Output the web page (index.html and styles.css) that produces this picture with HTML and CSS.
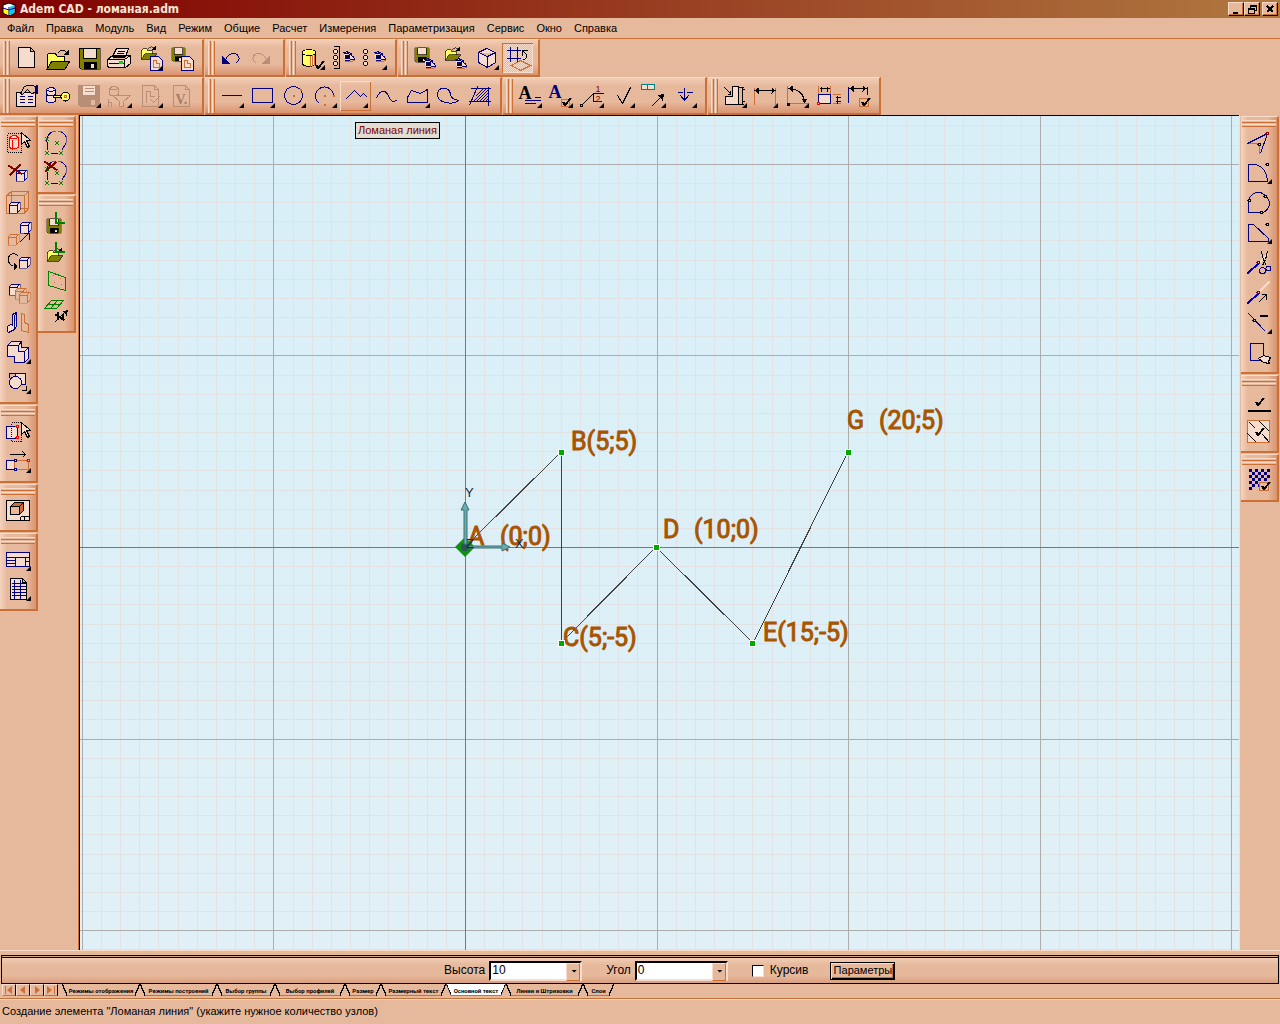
FILE: index.html
```html
<!DOCTYPE html>
<html lang="ru">
<head>
<meta charset="utf-8">
<title>Adem CAD - ломаная.adm</title>
<link rel="stylesheet" href="styles.css">
</head>
<body>
<svg class="defs" aria-hidden="true">
  <symbol id="eye" viewBox="-.5 -.5 14 12"><path class="lt" d="M1 3Q7 1 12 8L2 10"/><path class="o" d="M2 10q5 2 10-1"/><path d="M0 2q6-3 9 2"/><circle cx="4.500" cy="6" r="2" fill="#000" stroke="#000080"/></symbol>
  <symbol id="floppy" viewBox="-.5 -.5 22 22"><path class="k olive" d="M0 0h21v21H2l-2-2z"/><path class="k lt" d="M4 0h13v10H4z"/><path class="k bk" d="M5 14h12v7H5z"/><path class="lt ns" d="M12 16h3v4h-3z"/></symbol>
  <symbol id="folder" viewBox="-.5 -.5 26 22"><path class="k yel" d="M1 20V6l2-2h6l2 3h7v5"/><path class="k olive" d="M1 20l5-8h18l-5 8z"/><path class="k" d="M12 4q4-6 9 0"/><path class="bk ns" d="M23 0v6h-6z"/></symbol>
  <symbol id="doc" viewBox="-.5 -.5 14 16"><path class="lt" d="M0 0h8l4 4v10H0z"/><path class="o" d="M3 11V4h3v3h3v4z"/></symbol>
  <symbol id="check" viewBox="-.5 -.5 10 9"><path class="k w2" d="M1 4l2 3 6-7"/></symbol>
  <symbol id="cube" viewBox="-.5 -.5 12 12"><path class="lt" d="M0 3l3-3h8v8l-3 3H0zM0 3h8v8M8 3l3-3"/></symbol>
  <symbol id="cubeo" viewBox="-.5 -.5 12 12"><path class="o face" d="M0 3l3-3h8v8l-3 3H0zM0 3h8v8M8 3l3-3"/></symbol>
  <symbol id="circles" viewBox="-.5 -.5 22 24"><path d="M2 10a10 9 0 1 1 18 3l-3 5M2 10v8M6 21h7"/><path class="g" d="M0 5l4 4m0-4l-4 4M10 9l4 4m0-4l-4 4M0 19l4 4m0-4l-4 4M14 19l4 4m0-4l-4 4"/></symbol>
</svg>

<header class="titlebar">
  <svg class="logo" viewBox="0 0 14 14" aria-hidden="true"><path fill="#fff" stroke="#000" d="M1 3l6-2 6 2v8l-6 3-6-3z"/><path fill="#ff0" d="M2 7l5 2v4l-5-2z"/><path fill="#0cf" d="M8 5l4-2v8l-4 2z"/><path stroke="#008" fill="none" d="M1 6l6 2 6-2M7 5v9"/></svg>
  <h1>Adem CAD - ломаная.adm</h1>
  <div class="winbtns">
    <button aria-label="Свернуть"><svg viewBox="0 0 12 10"><path d="M3 9h5" stroke-width="2"/></svg></button>
    <button aria-label="Восстановить"><svg viewBox="0 0 12 10"><path d="M4 1h6v5H8M4 1v3M2 4h6v5H2zM2 5h6M4 2h6"/></svg></button>
    <button class="close" aria-label="Закрыть"><svg viewBox="0 0 12 10"><path d="M3 2l6 6M9 2L3 8" stroke-width="2"/></svg></button>
  </div>
</header>

<nav class="menubar">
  <button>Файл</button><button>Правка</button><button>Модуль</button><button>Вид</button><button>Режим</button><button>Общие</button><button>Расчет</button><button>Измерения</button><button>Параметризация</button><button>Сервис</button><button>Окно</button><button>Справка</button>
</nav>

<div class="row">
  <div class="bar">
    <button class="tool" aria-label="Новый"><svg viewBox="-.5 -.5 30 30"><path class="k lt" d="M7 4h12l4 4v16H7zM19 4v4h4"/></svg></button>
    <button class="tool" aria-label="Открыть"><svg viewBox="-.5 -.5 30 30"><use href="#folder" x="3" y="5" width="26" height="22"/></svg></button>
    <button class="tool" aria-label="Сохранить"><svg viewBox="-.5 -.5 30 30"><use href="#floppy" x="5" y="4" width="22" height="22"/></svg></button>
    <button class="tool" aria-label="Печать"><svg viewBox="-.5 -.5 30 30"><path class="k lt" d="M3 16l5-4h18v8l-5 4H4l-1-2zM3 16h17l6-4M20 16v8M4 20h16M8 13l4-8h12l-3 8zM13 8h7M12 10h7M8 14h12"/><path d="M14 19h4" stroke="#0d0" stroke-width="3"/></svg></button>
    <button class="tool more" aria-label="Открыть фрагмент"><svg viewBox="-.5 -.5 30 30"><use href="#folder" x="5" y="2" width="17" height="15"/><use href="#doc" x="14" y="12" width="14" height="16"/></svg></button>
    <button class="tool" aria-label="Сохранить фрагмент"><svg viewBox="-.5 -.5 30 30"><use href="#floppy" x="5" y="4" width="14" height="14"/><use href="#doc" x="14" y="12" width="14" height="16"/></svg></button>
  </div>
  <div class="bar">
    <button class="tool" aria-label="Отменить"><svg viewBox="-.5 -.5 30 30"><path d="M9 16q4-7 10-6q5 3 3 7l-3 3"/><path class="nv" d="M6 13v7h7z"/></svg></button>
    <button class="tool" aria-label="Повторить"><svg viewBox="-.5 -.5 30 30"><g class="dim"><path d="M19 16q-4-7-10-6q-5 3-3 7l3 3"/><path class="gy" d="M22 13v7h-7z"/></g></svg></button>
  </div>
  <div class="bar">
    <button class="tool more" aria-label="Тело"><svg viewBox="-.5 -.5 30 30"><path class="k yel" d="M5 9v12q6 4 13 0V9"/><path class="o" d="M15 11v11M17 11v10M13 12v11"/><ellipse class="k yel" cx="11.500" cy="9" rx="6.500" ry="3"/><use href="#check" x="17" y="17" width="10" height="9"/></svg></button>
    <button class="tool" aria-label="Показать группу"><svg viewBox="-.5 -.5 30 30"><path class="k" d="M5 3h6v22H5"/><g class="lt"><circle cx="7" cy="8" r="2"/><circle cx="7" cy="14" r="2"/><circle cx="7" cy="20" r="2"/></g><use href="#eye" x="14" y="7" width="14" height="12"/></svg></button>
    <button class="tool more" aria-label="Видимость"><svg viewBox="-.5 -.5 30 30"><g class="lt"><circle cx="6" cy="8" r="2"/><circle cx="6" cy="14" r="2"/><circle cx="6" cy="20" r="2"/></g><use href="#eye" x="14" y="7" width="14" height="12"/></svg></button>
  </div>
  <div class="bar">
    <button class="tool" aria-label="Сохранить вид"><svg viewBox="-.5 -.5 30 30"><use href="#floppy" x="5" y="4" width="15" height="15"/><use href="#eye" x="14" y="14" width="14" height="12"/></svg></button>
    <button class="tool" aria-label="Загрузить вид"><svg viewBox="-.5 -.5 30 30"><use href="#folder" x="4" y="3" width="17" height="15"/><use href="#eye" x="14" y="14" width="14" height="12"/></svg></button>
    <button class="tool more" aria-label="Изометрия"><svg viewBox="-.5 -.5 30 30"><path class="lt" d="M7 9l8-4 9 4v10l-8 5-9-5zM7 9l9 4 8-4M16 13v11"/></svg></button>
    <button class="tool pressed" aria-label="Рабочая плоскость" aria-pressed="true"><svg viewBox="-.5 -.5 30 30"><path d="M8 3v15M15 3v15M4 7h14M4 15h14"/><path class="k" d="M20 12V7h5M20 7l4 4q1 4-3 5"/><path class="o" d="M9 22l9-5 10 5-10 5z"/></svg></button>
  </div>
</div>

<div class="row">
  <div class="bar">
    <button class="tool" aria-label="Свойства"><svg viewBox="-.5 -.5 30 30"><path class="k lt" d="M5 11h19v14H5z"/><path d="M8 15h5M8 18h5M8 21h5M16 15h5M16 18h5M16 21h5"/><path class="k face" d="M9 12l4-7q6-3 11 0v6l-4 1-4-4-5 5z"/><path class="w2" d="M25 3v9"/></svg></button>
    <button class="tool" aria-label="Ключ"><svg viewBox="-.5 -.5 30 30"><path class="lt" d="M4 8v12q5 2 9 0V8q-4-4-9 0q4 4 9 0M4 13q4 3 9 0"/><path class="k yel" d="M11 14h7v2h-7z"/><circle class="k yel" cx="23" cy="15" r="4.500"/><path class="o" d="M22 14h2v2h-2z"/></svg></button>
    <button class="tool more" aria-label="Сохранить слой" disabled><svg viewBox="-.5 -.5 30 30"><g class="dim"><path class="gy" d="M5 4h21v21H7l-2-2z"/><path class="lt" d="M9 4h13v10H9z"/><path d="M11 7h9M11 10h9"/><path class="face" d="M17 18h5v6h-5z"/></g></svg></button>
    <button class="tool more" aria-label="Фильтр" disabled><svg viewBox="-.5 -.5 30 30"><g class="dim"><path d="M5 7q4-4 9 0v6q-4 3-9 0zq4 3 9 0M4 21h3v4M4 17v8"/><path class="face" d="M8 14h18l-7 6v5h-4v-5z"/></g></svg></button>
    <button class="tool more" aria-label="Проверить документ" disabled><svg viewBox="-.5 -.5 30 30"><g class="dim"><path d="M7 4h12l4 4v17H7zM19 4v4h4M11 21V10h4v5h4M15 18l3 3 6-6"/></g></svg></button>
    <button class="tool" aria-label="Версия" disabled><svg viewBox="-.5 -.5 30 30"><g class="dim"><path d="M7 4h12l4 4v17H7zM19 4v4h4"/><text class="serif" x="9" y="22">V.</text></g></svg></button>
  </div>
  <div class="bar">
    <button class="tool more" aria-label="Отрезок"><svg viewBox="-.5 -.5 30 30"><path d="M5 14h20"/></svg></button>
    <button class="tool more" aria-label="Прямоугольник"><svg viewBox="-.5 -.5 30 30"><path d="M5 7h20v14H5z"/></svg></button>
    <button class="tool more" aria-label="Окружность"><svg viewBox="-.5 -.5 30 30"><circle cx="15" cy="14" r="9"/><path class="o w2" d="M14 14h2M21 8h2"/></svg></button>
    <button class="tool more" aria-label="Дуга"><svg viewBox="-.5 -.5 30 30"><path d="M10 22a9 9 0 1 1 14-8"/><path class="o w2" d="M14 14h2M23 14h2M14 23h2"/></svg></button>
    <button class="tool more hover" aria-label="Ломаная линия"><svg viewBox="-.5 -.5 30 30"><path d="M5 18l9-9 6 6 3-3 4 4"/></svg></button>
    <button class="tool" aria-label="Сплайн"><svg viewBox="-.5 -.5 30 30"><path d="M5 17q3-8 7-7q4 0 6 7q3 5 8 1"/></svg></button>
    <button class="tool more" aria-label="Замкнутый контур"><svg viewBox="-.5 -.5 30 30"><path d="M5 21V16l4-7 9 3 7-4v13z"/></svg></button>
    <button class="tool" aria-label="Замкнутый сплайн"><svg viewBox="-.5 -.5 30 30"><path d="M13 21Q3 20 4 11Q7 5 13 7Q17 9 17 14Q19 18 25 19Q20 23 13 21z"/></svg></button>
    <button class="tool" aria-label="Штриховка"><svg viewBox="-.5 -.5 30 30"><path d="M6 7h20M4 20h22M5 24L13 5M24 5v19M9 20L22 7M12 20L24 8M15 20l9-9M18 20l6-6M21 20l3-3M11 15l8-8"/></svg></button>
  </div>
  <div class="bar">
    <button class="tool more" aria-label="Текст"><svg viewBox="-.5 -.5 30 30"><text class="serif" x="4" y="17">A</text><path d="M20 16h6M10 19h16M10 22h11"/></svg></button>
    <button class="tool more" aria-label="Параметры текста"><svg viewBox="-.5 -.5 30 30"><text class="serif blue" x="3" y="16">A</text><path class="o face" d="M16 18h8v7h-8z"/><use href="#check" x="16" y="16" width="10" height="9"/></svg></button>
    <button class="tool more" aria-label="Выноска"><svg viewBox="-.5 -.5 30 30"><path class="k" d="M5 24l12-12h10M17 12v8h8"/><circle class="k face" cx="5" cy="24" r="1"/><text class="num" x="19" y="10">1</text><text class="num" x="19" y="20">2</text></svg></button>
    <button class="tool more" aria-label="Шероховатость"><svg viewBox="-.5 -.5 30 30"><path class="k" d="M10 14l5 8 8-16"/></svg></button>
    <button class="tool more" aria-label="Допуск"><svg viewBox="-.5 -.5 30 30"><path class="teal lt" d="M3 3h13v5H3zM9 3v5"/><path class="k" d="M13 25l11-11"/><path class="bk ns" d="M26 12l-2 7-5-5z"/></svg></button>
    <button class="tool more" aria-label="База"><svg viewBox="-.5 -.5 30 30"><path d="M15 6v13M8 11h5M17 11h6M11 14l4 5 4-5"/></svg></button>
  </div>
  <div class="bar">
    <button class="tool more" aria-label="Авторазмер"><svg viewBox="-.5 -.5 30 30"><path class="k lt" d="M6 15h7V5h6v18H6z"/><path class="k" d="M19 6h5M19 23h5M23 6v16M22 8h3M22 20h3M5 6l6 6M11 9v4H8"/></svg></button>
    <button class="tool more" aria-label="Линейный размер"><svg viewBox="-.5 -.5 30 30"><path class="o" d="M4 6v17M25 6v17"/><path class="k" d="M5 9h20"/><path class="bk ns" d="M4 9l4-3v6zM25 9l-4-3v6z"/></svg></button>
    <button class="tool more" aria-label="Угловой размер"><svg viewBox="-.5 -.5 30 30"><path class="o" d="M6 4v18h20"/><path class="k" d="M8 7q14 1 15 14"/><path class="bk ns" d="M7 7l4-3v6zM23 22l-3-5h6zM5 21h3v3H5z"/></svg></button>
    <button class="tool" aria-label="Размер контура"><svg viewBox="-.5 -.5 30 30"><path class="o" d="M6 4v18M18 4v10M20 13h8M20 22h8"/><path class="lt" d="M6 13h12v9H6z"/><path class="k" d="M7 7h10M9 5v5M15 5v5M25 14v8M23 16h5M23 20h5"/><circle class="r lt" cx="6" cy="22" r="1"/></svg></button>
    <button class="tool" aria-label="Проверка размеров"><svg viewBox="-.5 -.5 30 30"><path d="M5 5v16M24 5v8"/><path class="k" d="M6 7h17"/><path class="bk ns" d="M6 7l4-3v6zM23 7l-4-3v6z"/><path class="o" d="M16 17h9v8h-9z"/><use href="#check" x="17" y="16" width="10" height="9"/></svg></button>
  </div>
</div>

<main class="work">
  <div class="dock">
    <div class="col">
      <div class="bar v">
        <button class="tool" aria-label="Выбрать тело"><svg viewBox="-.5 -.5 30 30"><path class="k dot" d="M4 6h14v19H4z"/><path class="r lt" d="M6 10v10q4 3 9 0V10q-4-4-9 0q4 3 9 0M9 12v10"/><path class="k lt" d="M18 5v12l3-3 3 6 2-1-3-6h4z"/></svg></button>
        <button class="tool" aria-label="Удалить"><svg viewBox="-.5 -.5 30 30"><use href="#cube" x="12" y="12" width="12" height="12"/><path class="m w2" d="M5 8l14 9M17 7L6 18"/></svg></button>
        <button class="tool" aria-label="Масштаб"><svg viewBox="-.5 -.5 30 30"><path class="o" d="M3 8l5-4h17v17l-4 5H3zM3 8h18v18M21 8l4-4M8 4v17h17"/><use href="#cube" x="5" y="14" width="12" height="12"/></svg></button>
        <button class="tool" aria-label="Переместить"><svg viewBox="-.5 -.5 30 30"><use href="#cube" x="16" y="4" width="12" height="12"/><use href="#cubeo" x="4" y="16" width="12" height="12"/><path class="k" d="M16 25l9-9M20 16h6v6"/></svg></button>
        <button class="tool" aria-label="Повернуть"><svg viewBox="-.5 -.5 30 30"><use href="#cube" x="15" y="9" width="12" height="12"/><path class="k" d="M15 9q-4-5-9-1q-4 7 4 11"/><path class="bk ns" d="M10 14l4 5-4 4z"/></svg></button>
        <button class="tool" aria-label="Копировать"><svg viewBox="-.5 -.5 30 30"><use href="#cube" x="5" y="6" width="12" height="12"/><use href="#cubeo" x="11" y="10" width="12" height="12"/><use href="#cubeo" x="15" y="14" width="12" height="12"/></svg></button>
        <button class="tool" aria-label="Симметрия"><svg viewBox="-.5 -.5 30 30"><path class="lt" d="M9 7l4-2v14l-2 3-6 3-1-1v-5l5-3zM9 7v11M13 5l-2 3v14"/><path class="o" d="M18 6v17l7 2v-8l-4-2V7z"/></svg></button>
        <button class="tool more" aria-label="Булева операция"><svg viewBox="-.5 -.5 30 30"><path class="lt" d="M4 8l4-4h10v6h7v11l-4 4H11v-6H4zM4 8h11v6h6v11M15 8l3-4M21 14l4-4"/></svg></button>
        <button class="tool more" aria-label="Пересечение"><svg viewBox="-.5 -.5 30 30"><path class="k" d="M6 10V6h5M18 23h5v-5"/><path class="lt" d="M12 6h10v11H12z"/><circle class="lt" cx="12" cy="15" r="6"/></svg></button>
      </div>
      <div class="bar v">
        <button class="tool" aria-label="Выбрать узлы"><svg viewBox="-.5 -.5 30 30"><path class="lt" d="M3 10h11v12H3z"/><path class="k dot" d="M8 6h10v19H8z"/><circle class="r lt" cx="14" cy="10" r="1.500"/><circle class="r lt" cx="14" cy="21" r="1.500"/><path class="k lt" d="M18 6v12l3-3 3 6 2-1-3-6h4z"/></svg></button>
        <button class="tool more" aria-label="Переместить узлы"><svg viewBox="-.5 -.5 30 30"><path class="k" d="M6 8h16M19 5l3 3-3 3"/><path class="lt" d="M3 14h8v9H3z"/><path class="o" d="M11 14h14v9H11z"/><circle class="r lt" cx="25" cy="14" r="1.500"/><circle class="lt" cx="12" cy="14" r="1.500"/><circle class="lt" cx="12" cy="23" r="1.500"/></svg></button>
      </div>
      <div class="bar v">
        <button class="tool" aria-label="Вид"><svg viewBox="-.5 -.5 30 30"><path class="k lt" d="M3 5h23v20H3z"/><path class="k" d="M17 21h9M17 21v4M21 21v4"/><path fill="#cb6f34" class="k" d="M7 11l4-4h9v8l-4 4H7z"/><path class="k face" d="M7 11h9v8H7zM16 11l4-4"/></svg></button>
      </div>
      <div class="bar v">
        <button class="tool more" aria-label="Таблица"><svg viewBox="-.5 -.5 30 30"><path class="lt" d="M3 8h23v14H3zM3 13h23M12 13v9M22 13v9M3 16h9M3 19h9M22 17h4"/></svg></button>
        <button class="tool more" aria-label="Спецификация"><svg viewBox="-.5 -.5 30 30"><path class="k lt" d="M7 4h12l4 4v17H7zM19 4v4h4"/><path d="M8 9h14M8 12h14M8 15h14M8 18h14M8 21h14M11 5v19M17 5v19"/></svg></button>
      </div>
    </div>
    <div class="col">
      <div class="bar v">
        <button class="tool" aria-label="Привязка"><svg viewBox="-.5 -.5 30 30"><use href="#circles" x="3" y="4" width="22" height="24"/></svg></button>
        <button class="tool" aria-label="Отменить привязку"><svg viewBox="-.5 -.5 30 30"><use href="#circles" x="3" y="4" width="22" height="24"/><path class="m w2" d="M3 4l13 9M15 4L4 14"/></svg></button>
      </div>
      <div class="bar v">
        <button class="tool" aria-label="Сохранить СК"><svg viewBox="-.5 -.5 30 30"><use href="#floppy" x="5" y="12" width="15" height="15"/><path class="g w2" d="M14 5v11h9"/></svg></button>
        <button class="tool" aria-label="Загрузить СК"><svg viewBox="-.5 -.5 30 30"><use href="#folder" x="5" y="11" width="17" height="15"/><path class="g w2" d="M14 5v10h9"/></svg></button>
        <button class="tool" aria-label="Плоскость"><svg viewBox="-.5 -.5 30 30"><path class="g" d="M7 5l17 6v13L7 19z"/><path class="o" d="M11 9h1M18 12h1M12 16h1M19 18h1"/></svg></button>
        <button class="tool" aria-label="Сетка плоскости"><svg viewBox="-.5 -.5 30 30"><path class="g" d="M10 4h12l-7 8H3zM16 4l-7 8M6 8h12"/><path class="k" d="M13 26l11-11"/><path class="k w2" d="M14 18l9 6M17 16l-1 8M21 17v6"/><path class="bk ns" d="M27 13l-2 6-4-4z"/></svg></button>
      </div>
    </div>
  </div>

  <section class="canvas" aria-label="Чертёж">
    <svg id="drawing">
      <g transform="translate(385 431)">
        <path id="minor" class="minor"/>
        <path id="major" class="major"/>
        <path class="axis" d="M-2000 .5H2000M.5-2000V2000"/>
        <path class="shape" d="M0 0L96-95V96L191 0L288 96L383-95"/>
        <g class="labels">
          <text x="3" y="-2">A</text><text x="35" y="-2">(0;0)</text>
          <text x="106" y="-97">B(5;5)</text>
          <text x="98" y="99">C(5;-5)</text>
          <text x="198" y="-9">D</text><text x="229" y="-9">(10;0)</text>
          <text x="298" y="94">E(15;-5)</text>
          <text x="382" y="-118">G</text><text x="414" y="-118">(20;5)</text>
        </g>
        <path class="diamond" d="M-10 0L0-10L10 0L0 10z"/>
        <circle cx="0" cy="0" r="4" fill="#2b5558"/>
        <path class="arrow" d="M3-1h34v-3l8 4-8 4v-3H3zM-1-3v-34h-3l4-8 4 8H2v34z"/>
        <g class="triad"><text x="0" y="-50">Y</text><text x="50" y="1">X</text><text x="1" y="1">Z</text></g>
        <g class="node"><path d="M93-98h6v6h-6zM93 93h6v6h-6zM188-3h6v6h-6zM284 93h6v6h-6zM380-98h6v6h-6z"/></g>
      </g>
    </svg>
    <div class="tip" role="tooltip">Ломаная линия</div>
  </section>

  <div class="dock right">
    <div class="col">
      <div class="bar v">
        <button class="tool" aria-label="Узел"><svg viewBox="-.5 -.5 30 30"><path class="o" d="M3 16h12v10"/><path d="M3 16l20-10-7 20"/><circle class="m lt" cx="23" cy="6" r="1.500"/><circle class="k lt" cx="15" cy="17" r="1.500"/></svg></button>
        <button class="tool more" aria-label="Скругление"><svg viewBox="-.5 -.5 30 30"><path d="M4 7h6q12 2 13 17H4z"/><circle class="k lt" cx="23" cy="7" r="1.500"/></svg></button>
        <button class="tool" aria-label="Контур"><svg viewBox="-.5 -.5 30 30"><path d="M4 25V12q4-8 12-7q9 4 9 12q-2 8-9 8z"/><circle class="k lt" cx="5" cy="13" r="1.500"/><circle class="k lt" cx="21" cy="9" r="1.500"/><circle class="k lt" cx="17" cy="25" r="1.500"/></svg></button>
        <button class="tool more" aria-label="Фаска"><svg viewBox="-.5 -.5 30 30"><path d="M4 7h5l15 14v3H4z"/><circle class="k lt" cx="23" cy="7" r="1.500"/></svg></button>
        <button class="tool" aria-label="Разрезать"><svg viewBox="-.5 -.5 30 30"><path class="w2 wh" d="M14 16l9-9"/><path class="w2 bl" d="M3 26l11-10"/><circle class="m lt" cx="14" cy="15" r="1.500"/><path class="k" d="M17 4l2 9 3 5M23 4l-2 8-3 6"/><circle cx="18" cy="23" r="3"/><circle cx="24" cy="21" r="2.500"/></svg></button>
        <button class="tool" aria-label="Продлить"><svg viewBox="-.5 -.5 30 30"><path class="w2 wh" d="M14 15L25 4"/><path class="w2 bl" d="M3 26l11-10"/><circle class="m lt" cx="14" cy="15" r="1.500"/><path class="k" d="M14 25l8-8M17 17h5v5"/></svg></button>
        <button class="tool more" aria-label="Разорвать"><svg viewBox="-.5 -.5 30 30"><path d="M4 6l17 18"/><circle class="k lt" cx="10" cy="13" r="1.500"/><path class="k w2" d="M15 8h8"/></svg></button>
        <button class="tool" aria-label="Захват"><svg viewBox="-.5 -.5 30 30"><path d="M6 6h13v17H6z"/><path class="k lt" d="M14 21l5-3 7 2-2 4 1 2-6-1z"/></svg></button>
      </div>
      <div class="bar v">
        <button class="tool" aria-label="Применить"><svg viewBox="-.5 -.5 30 30"><use href="#check" x="10" y="11" width="10" height="9"/><path class="k w2" d="M3 24h23"/></svg></button>
        <button class="tool" aria-label="Проверить штриховку"><svg viewBox="-.5 -.5 30 30"><path class="o lt" d="M3 4h22v22H3z"/><path class="k" d="M3 17l9 9M5 6l6 6M15 5l10 10M18 18l7 8"/><use href="#check" x="10" y="11" width="10" height="9"/></svg></button>
      </div>
      <div class="bar v">
        <button class="tool" aria-label="Растр"><svg viewBox="-.5 -.5 30 30"><path class="w3" d="M4 5h21M4 11h21M4 17h12M4 23h6"/><path class="w3" d="M7 8h18M7 14h18M7 20h9"/><path class="o face" d="M15 17h9v8h-9z"/><use href="#check" x="16" y="16" width="10" height="9"/></svg></button>
      </div>
    </div>
  </div>
</main>

<footer class="bottom">
  <form class="options" onsubmit="return false">
    <label for="h">Высота</label>
    <span class="combo"><select id="h"><option>10</option><option>5</option></select></span>
    <label class="second" for="a">Угол</label>
    <span class="combo"><select id="a"><option>0</option><option>90</option></select></span>
    <label class="tick"><input type="checkbox">Курсив</label>
    <button class="params">Параметры</button>
  </form>
  <div class="tabs">
    <div class="nav">
      <button aria-label="В начало"><svg viewBox="0 0 12 10"><path d="M9 1v8L4 5zM2 1h1v8H2z"/></svg></button>
      <button aria-label="Назад"><svg viewBox="0 0 12 10"><path d="M8 1v8L3 5z"/></svg></button>
      <button aria-label="Вперёд"><svg viewBox="0 0 12 10"><path d="M4 1v8l5-4z"/></svg></button>
      <button aria-label="В конец"><svg viewBox="0 0 12 10"><path d="M2 1v8l5-4zM9 1h1v8H9z"/></svg></button>
    </div>
    <div class="tablist" role="tablist">
      <button role="tab">Режимы отображения</button>
      <button role="tab">Режимы построений</button>
      <button role="tab">Выбор группы</button>
      <button role="tab">Выбор профилей</button>
      <button role="tab">Размер</button>
      <button role="tab">Размерный текст</button>
      <button role="tab" aria-selected="true">Основной текст</button>
      <button role="tab">Линии и Штриховки</button>
      <button role="tab">Слои</button>
    </div>
  </div>
  <p class="status">Создание элемента "Ломаная линия" (укажите нужное количество узлов)</p>
</footer>
<script src="grid.js"></script>
</body>
</html>
```
FILE: styles.css
```css
:root {
  --face: #e7b99c;
  --light: #f8dccb;
  --dark: #cb6f34;
  --navy: #000080;
}
* { box-sizing: border-box; }
body {
  margin: 0;
  height: 100vh;
  display: flex;
  flex-direction: column;
  overflow: hidden;
  background: var(--face);
  color: #000;
  font: 11px/13px "Liberation Sans", Arial, sans-serif;
}
button, select, input { font: inherit; color: inherit; margin: 0; }
button { border: 0; padding: 0; background: none; }
svg { display: block; }
.defs { position: absolute; width: 0; height: 0; }

.titlebar {
  display: flex;
  align-items: center;
  gap: 4px;
  height: 18px;
  padding: 0 2px;
  background: linear-gradient(90deg, #800000, #b07840);
}
.logo { width: 14px; height: 14px; }
.titlebar h1 {
  flex: 1;
  margin: 0;
  color: #f8e4d4;
  font: bold 12px/16px "DejaVu Sans Condensed", "DejaVu Sans", sans-serif;
}
.winbtns { display: flex; }
.winbtns button {
  width: 16px;
  height: 14px;
  background: var(--face);
  border: 1px solid;
  border-color: var(--light) #000 #000 var(--light);
  box-shadow: inset -1px -1px var(--dark);
}
.winbtns .close { margin-left: 2px; }
.winbtns svg { width: 12px; height: 10px; margin: auto; fill: none; stroke: #000; shape-rendering: crispEdges; }

.menubar {
  display: flex;
  align-items: center;
  gap: 12px;
  height: 21px;
  padding: 0 7px;
  border-bottom: 1px solid var(--dark);
}

.row { display: flex; gap: 1px; height: 38px; }
.bar {
  position: relative;
  display: flex;
  padding: 3px 5px 3px 11px;
  border-top: 1px solid var(--light);
  border-right: 2px solid var(--dark);
  border-bottom: 2px solid var(--dark);
  background: linear-gradient(#f1cdb6, #e7b99c 8px, #e7b99c 24px, #d99470);
}
.bar::before {
  content: "";
  position: absolute;
  left: 3px;
  top: 1px;
  bottom: 0;
  width: 7px;
  background: linear-gradient(90deg, var(--light) 1px, var(--face) 1px 2px, var(--dark) 2px 3px, var(--face) 3px 4px, var(--light) 4px 5px, var(--face) 5px 6px, var(--dark) 6px);
}
.bar.v {
  flex-direction: column;
  padding: 10px 0 5px 3px;
  background: linear-gradient(90deg, #f4d3bf, #e7b99c 7px, #e7b99c 26px, #d99470);
}
.bar.v::before {
  left: 1px;
  right: 1px;
  top: 3px;
  bottom: auto;
  width: auto;
  height: 7px;
  background: linear-gradient(var(--light) 1px, var(--face) 1px 2px, var(--dark) 2px 3px, var(--face) 3px 4px, var(--light) 4px 5px, var(--face) 5px 6px, var(--dark) 6px);
}
.tool { position: relative; width: 31px; height: 30px; flex: none; }
.tool svg { width: 30px; height: 30px; fill: none; stroke: var(--navy); shape-rendering: crispEdges; }
.tool.more::after {
  content: "";
  position: absolute;
  left: 23px;
  top: 22px;
  width: 5px;
  height: 5px;
  background: #000;
  clip-path: polygon(100% 0, 100% 100%, 0 100%);
}
.tool.pressed {
  background: repeating-conic-gradient(#f8dccb 0 25%, #e7b99c 0 50%) 0 0 / 2px 2px;
  box-shadow: inset 1px 1px var(--dark), inset -1px -1px var(--light);
}
.tool.hover { box-shadow: inset 1px 1px var(--light), inset -1px -1px var(--dark); }

.k { stroke: #000; }
.o { stroke: var(--dark); }
.r { stroke: #f00; }
.m { stroke: #800000; }
.g { stroke: #008000; }
.teal { stroke: #008080; }
.bl { stroke: #0000c0; }
.wh { stroke: var(--light); }
.ns { stroke: none; }
.lt { fill: #f6dccd; }
.face { fill: var(--face); }
.yel { fill: #ffff60; }
.olive { fill: #808000; }
.bk { fill: #000; }
.nv { fill: var(--navy); }
.gy { fill: #b98e76; }
.dim { stroke: #b98e76; }
.w2 { stroke-width: 2; }
.w3 { stroke-width: 3; stroke-dasharray: 3 3; }
.dot { stroke-dasharray: 1 1; }
.serif { font: bold 18px "Liberation Serif", serif; fill: #000; stroke: none; }
.serif.blue { fill: var(--navy); }
.dim .serif { font-size: 14px; fill: #a57c66; }
.num { font: 9px "Liberation Sans", sans-serif; fill: #800000; stroke: none; }

.work { flex: 1; display: flex; min-height: 0; }
.dock {
  display: flex;
  flex: none;
  width: 80px;
  border-right: 1px solid #000;
  box-shadow: inset -1px 0 var(--dark);
  padding-top: 1px;
}
.dock.right { width: 41px; padding-left: 1px; border: 0; border-left: 1px solid var(--light); box-shadow: none; }
.col { display: flex; flex-direction: column; gap: 1px; width: 38px; }

.canvas {
  position: relative;
  flex: 1;
  min-width: 0;
  overflow: hidden;
  border-top: 1px solid #000;
  background: linear-gradient(#d8eff8, #e1f0f6);
}
#drawing { width: 100%; height: 100%; }
.minor { stroke: #e2e2e2; shape-rendering: crispEdges; }
.major { stroke: #acacac; shape-rendering: crispEdges; }
.axis { stroke: #787878; shape-rendering: crispEdges; }
.shape { fill: none; stroke: #404040; shape-rendering: crispEdges; }
.labels { font: 25px Roboto, sans-serif; fill: #a85400; stroke: #a85400; }
.diamond { fill: #129012; }
.arrow { fill: #68aeb0; stroke: #3c6c70; }
.triad { font: 13px "Liberation Sans", sans-serif; fill: #102840; }
.node { fill: #00a800; stroke: #fff; shape-rendering: crispEdges; }
.tip {
  position: absolute;
  left: 275px;
  top: 6px;
  padding: 1px 2px;
  border: 1px solid #000;
  background: #e2ddd2;
  color: #800000;
  white-space: nowrap;
}

.bottom { flex: none; border-top: 1px solid var(--light); padding-top: 4px; }
.options {
  display: flex;
  align-items: center;
  height: 29px;
  margin: 0 1px;
  padding-left: 442px;
  border: 1px solid #000;
  border-top: 3px double #000;
  background: linear-gradient(#f1cdb6, #e7b99c 7px, #e7b99c 17px, #d99f7e);
}
.options label { font-size: 12px; }
.combo { position: relative; width: 93px; height: 20px; margin-left: 4px; }
.combo::after {
  content: "";
  position: absolute;
  right: 2px;
  top: 2px;
  width: 12px;
  height: 16px;
  border: 1px solid;
  border-color: var(--light) var(--dark) var(--dark) var(--light);
  background: var(--face);
  pointer-events: none;
}
.combo::before {
  content: "";
  position: absolute;
  z-index: 1;
  right: 5px;
  top: 9px;
  width: 6px;
  height: 3px;
  background: #000;
  clip-path: polygon(0 0, 100% 0, 50% 100%);
  pointer-events: none;
}
.combo select {
  width: 100%;
  height: 100%;
  padding: 0 1px;
  appearance: none;
  border: 2px solid #000;
  border-color: #000 var(--light) var(--light) #000;
  border-radius: 0;
  background: #fff;
  font-size: 12px;
}
.options .second { margin-left: 24px; }
.tick { display: flex; align-items: center; gap: 6px; margin-left: 24px; }
.tick input {
  appearance: none;
  width: 12px;
  height: 12px;
  background: #fff;
  border: 1px solid;
  border-color: #000 var(--light) var(--light) #000;
}
.params {
  width: 65px;
  height: 18px;
  margin-left: 22px;
  border: 1px solid #000;
  box-shadow: inset 1px 1px var(--light), inset -1px -1px #000, inset -2px -2px var(--dark);
}
.tabs { display: flex; height: 15px; padding-left: 2px; border-bottom: 1px solid var(--dark); }
.nav { display: flex; }
.nav button {
  width: 14px;
  height: 12px;
  border: 1px solid;
  border-color: var(--light) #000 var(--dark) var(--light);
}
.nav svg { width: 12px; height: 10px; fill: var(--dark); }
.tablist {
  display: grid;
  grid-template-columns: 78px 77px 58px 70px 36px 65px 60px 77px 31px;
  height: 12px;
  margin-left: 4px;
  font: bold 6px/11px Roboto, sans-serif;
}
.tablist button {
  white-space: nowrap;
  background:
    linear-gradient(var(--dark), var(--dark)) 5px 100% / calc(100% - 10px) 1px no-repeat,
    linear-gradient(to top right, transparent 46%, #000 46% 60%, transparent 60%) 0 0 / 5px 100% no-repeat,
    linear-gradient(to top left, transparent 46%, #000 46% 60%, transparent 60%) 100% 0 / 5px 100% no-repeat;
}
.tablist [aria-selected="true"] {
  background-color: #fff;
  clip-path: polygon(0 0, 100% 0, calc(100% - 5px) 100%, 5px 100%);
}
.status { height: 25px; margin: 0; padding: 5px 2px; border-top: 1px solid var(--light); }
```
FILE: grid.js
```js
// Grid lines around the origin of the drawing: one major line per ten minor ones.
const step = 19.16;
function lines(every) {
  let d = "";
  for (let i = -100; i <= 100; i += every) {
    const p = Math.round(i * step) + 0.5;
    d += `M-2000 ${p}H2000M${p}-2000V2000`;
  }
  return d;
}
document.getElementById("minor").setAttribute("d", lines(1));
document.getElementById("major").setAttribute("d", lines(10));
```
